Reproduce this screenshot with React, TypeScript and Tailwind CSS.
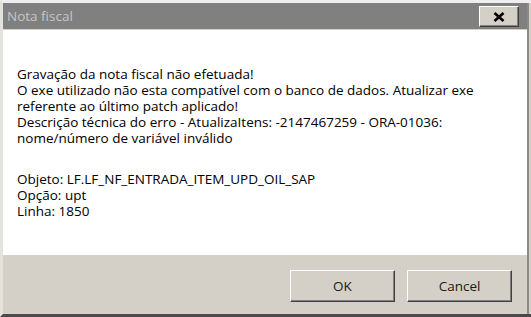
const message = [
    'Gravação da nota fiscal não efetuada!',
    'O exe utilizado não esta compatível com o banco de dados. Atualizar exe',
    'referente ao último patch aplicado!',
    'Descrição técnica do erro - AtualizaItens: -2147467259 - ORA-01036:',
    'nome/número de variável inválido',
];

const details = [
    'Objeto: LF.LF_NF_ENTRADA_ITEM_UPD_OIL_SAP',
    'Opção: upt',
    'Linha: 1850',
];

function DialogButton({ label }: { label: string }) {
    return (
        <button className="w-[105px] h-[32px] bg-[#d4d0c8] border border-t-white border-l-white border-r-[#404040] border-b-[#404040] shadow-[inset_-1px_-1px_0_#808080] text-[13.5px] text-[#1a1a1a]">
            {label}
        </button>
    );
}

export default function App() {
    return (
        <div
            className="w-[531px] h-[317px] flex flex-col bg-[#d4d0c8] border-l-[3px] border-t-[3px] border-l-[#e4e2dc] border-t-[#eeeeee] border-b-[3px] border-b-[#4a4a4a]"
            style={{ fontFamily: '"Open Sans", "Noto Sans", sans-serif' }}
        >
            <div className="flex flex-1 flex-col border-r-2 border-r-[#8a8a8a] mr-[2px]">
                {/* Title bar */}
                <div className="h-[26px] bg-[#808080] flex items-center justify-between pl-[4px] pr-[8px]">
                    <span className="text-[13.5px] text-[#c6c6c6]">Nota fiscal</span>
                    <button className="w-[40px] h-[21px] mt-[1px] bg-[#d4d0c8] border border-t-white border-l-white border-r-[#404040] border-b-[#404040] shadow-[inset_-1px_-1px_0_#808080] flex items-center justify-center">
                        <svg width="12" height="10" viewBox="0 0 12 10">
                            <path d="M1.5 1 L10.5 9 M10.5 1 L1.5 9" stroke="#000" strokeWidth="2.6" />
                        </svg>
                    </button>
                </div>

                {/* Message */}
                <div className="h-[225px] mt-px bg-white pl-[14px] pt-[36px] text-[13.5px] leading-[16px] text-black">
                    {message.map(line => (
                        <div key={line} className="whitespace-nowrap">{line}</div>
                    ))}
                    <div className="mt-[25px]">
                        {details.map(line => (
                            <div key={line} className="whitespace-nowrap">{line}</div>
                        ))}
                    </div>
                </div>

                {/* Buttons */}
                <div className="flex-1 flex justify-end gap-[12px] pt-[15px] pr-[15px]">
                    <DialogButton label="OK" />
                    <DialogButton label="Cancel" />
                </div>
            </div>
        </div>
    );
}
